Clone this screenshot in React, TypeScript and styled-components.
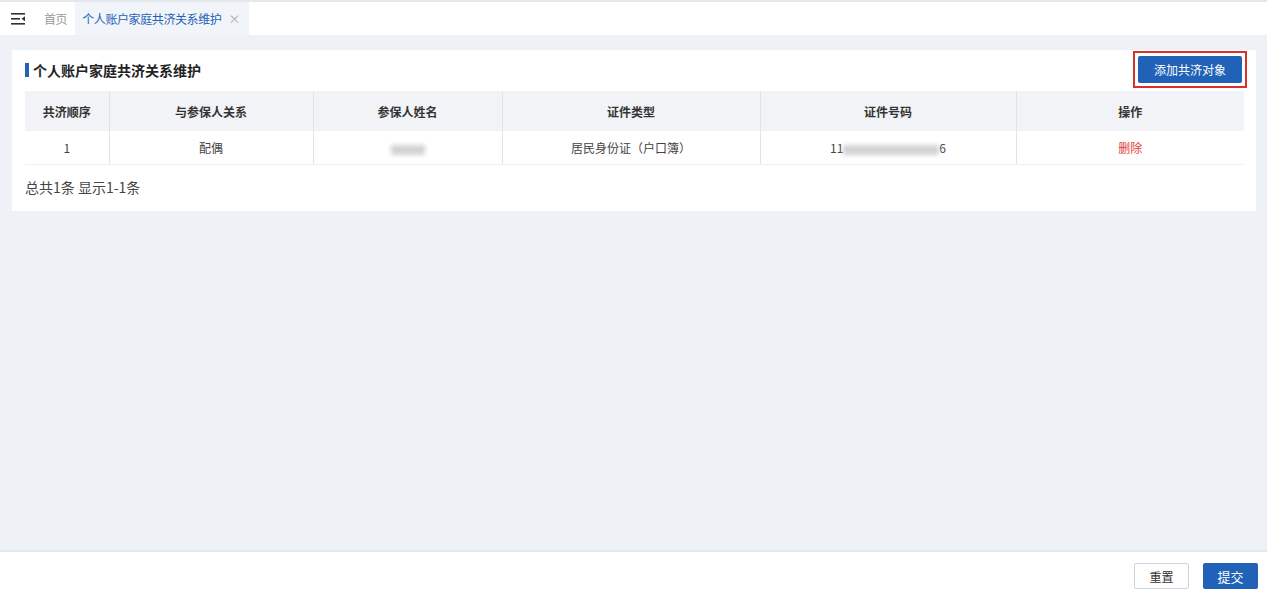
import React from 'react';
import styled, { createGlobalStyle } from 'styled-components';

const GlobalStyle = createGlobalStyle`
  html, body {
    margin: 0;
    padding: 0;
    height: 100%;
  }
  body {
    font-family: "Noto Sans CJK SC", "Liberation Sans", sans-serif;
    color: #333;
    background: #eef1f5;
  }
  #root {
    height: 100%;
  }
`;

const Page = styled.div`
  display: flex;
  flex-direction: column;
  height: 600px;
  background: #eef1f5;
`;

const TopBar = styled.div`
  display: flex;
  align-items: stretch;
  height: 33px;
  background: #fff;
  border-top: 2px solid #e4e7ec;
  flex-shrink: 0;
`;

const MenuToggle = styled.div`
  width: 36px;
  display: flex;
  align-items: center;
  justify-content: center;
`;

const Tab = styled.div<{ active?: boolean }>`
  display: flex;
  align-items: center;
  gap: 7px;
  padding: 0 ${({ active }) => (active ? '9px 0 7px' : '8px')};
  font-size: 12px;
  letter-spacing: -0.4px;
  color: ${({ active }) => (active ? '#1f62b7' : '#999')};
  background: ${({ active }) => (active ? '#f1f4f8' : 'transparent')};
`;

const Close = styled.span`
  font-size: 12px;
  color: #aaa;
`;

const Content = styled.div`
  flex: 1;
  padding: 15px 11px 0 12px;
`;

const Card = styled.div`
  background: #fff;
  padding: 2px 12px 14px 13px;
`;

const CardHeader = styled.div`
  display: flex;
  align-items: center;
  justify-content: space-between;
  height: 35px;
  margin-bottom: 4px;
`;

const Title = styled.h3`
  margin: 0;
  display: flex;
  align-items: center;
  gap: 4px;
  font-size: 14px;
  font-weight: bold;
  color: #222;
  &::before {
    content: '';
    width: 4px;
    height: 14px;
    background: #1f62b7;
  }
`;

const Outline = styled.div`
  border: 2px solid #d9302c;
  padding: 3px;
  margin-right: -3px;
`;

const PrimaryButton = styled.button`
  border: none;
  border-radius: 2px;
  background: #1f62b7;
  color: #fff;
  font-family: inherit;
  font-size: 12px;
  height: 27px;
  padding: 0 16px;
  cursor: pointer;
`;

const DefaultButton = styled.button`
  border: 1px solid #cfd4db;
  border-radius: 2px;
  background: #fff;
  color: #333;
  font-family: inherit;
  font-size: 12px;
  height: 26px;
  width: 55px;
  cursor: pointer;
`;

const Table = styled.table`
  width: 100%;
  border-collapse: collapse;
  font-size: 12px;
  table-layout: fixed;
`;

const Th = styled.th`
  height: 40px;
  padding: 0;
  background: #f1f3f6;
  color: #333;
  font-weight: bold;
  border-left: 1px solid #e0e3e8;
  &:first-child {
    border-left: none;
  }
`;

const Td = styled.td`
  height: 33px;
  padding: 0;
  text-align: center;
  color: #444;
  border-left: 1px solid #e0e3e8;
  border-bottom: 1px solid #f0f1f4;
  &:first-child {
    border-left: none;
  }
`;

const Blur = styled.span<{ w: number }>`
  display: inline-block;
  width: ${({ w }) => w}px;
  height: 10px;
  background: #d3d3d6;
  filter: blur(2px);
  vertical-align: middle;
`;

const DeleteLink = styled.span`
  color: #e23b33;
  cursor: pointer;
`;

const Summary = styled.div`
  font-size: 14px;
  color: #444;
  padding-top: 12px;
`;

const Footer = styled.div`
  height: 48px;
  flex-shrink: 0;
  background: #fff;
  border-top: 2px solid #e4e7ec;
  display: flex;
  align-items: center;
  justify-content: flex-end;
  gap: 14px;
  padding-right: 9px;
`;

const SubmitButton = styled(PrimaryButton)`
  width: 55px;
  padding: 0;
  height: 26px;
  font-size: 13px;
`;

const columns = [
  { label: '共济顺序', width: 84 },
  { label: '与参保人关系', width: 204 },
  { label: '参保人姓名', width: 189 },
  { label: '证件类型', width: 258 },
  { label: '证件号码', width: 256 },
  { label: '操作', width: 228 },
];

const MenuIcon = () => (
  <svg width="15" height="12" viewBox="0 0 15 12">
    <rect x="0" y="0" width="14" height="1.6" fill="#333" />
    <rect x="0" y="5" width="9" height="1.6" fill="#333" />
    <rect x="0" y="10" width="14" height="1.6" fill="#333" />
    <path d="M14 3.3 L10.5 5.8 L14 8.3 Z" fill="#333" />
  </svg>
);

export default function App() {
  return (
    <Page>
      <GlobalStyle />
      <TopBar>
        <MenuToggle>
          <MenuIcon />
        </MenuToggle>
        <Tab>首页</Tab>
        <Tab active>
          个人账户家庭共济关系维护
          <Close>×</Close>
        </Tab>
      </TopBar>
      <Content>
        <Card>
          <CardHeader>
            <Title>个人账户家庭共济关系维护</Title>
            <Outline>
              <PrimaryButton>添加共济对象</PrimaryButton>
            </Outline>
          </CardHeader>
          <Table>
            <colgroup>
              {columns.map((c) => (
                <col key={c.label} style={{ width: c.width }} />
              ))}
            </colgroup>
            <thead>
              <tr>
                {columns.map((c) => (
                  <Th key={c.label}>{c.label}</Th>
                ))}
              </tr>
            </thead>
            <tbody>
              <tr>
                <Td>1</Td>
                <Td>配偶</Td>
                <Td>
                  <Blur w={34} />
                </Td>
                <Td>居民身份证（户口簿）</Td>
                <Td>
                  11
                  <Blur w={96} />
                  6
                </Td>
                <Td>
                  <DeleteLink>删除</DeleteLink>
                </Td>
              </tr>
            </tbody>
          </Table>
          <Summary>总共1条 显示1-1条</Summary>
        </Card>
      </Content>
      <Footer>
        <DefaultButton>重置</DefaultButton>
        <SubmitButton>提交</SubmitButton>
      </Footer>
    </Page>
  );
}
